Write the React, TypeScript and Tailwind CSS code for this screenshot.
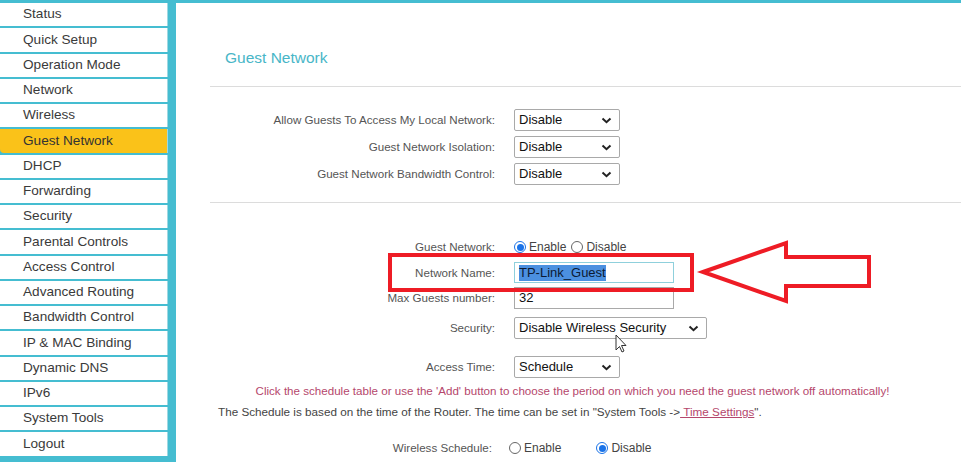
import React from 'react';

const MENU = [
  'Status',
  'Quick Setup',
  'Operation Mode',
  'Network',
  'Wireless',
  'Guest Network',
  'DHCP',
  'Forwarding',
  'Security',
  'Parental Controls',
  'Access Control',
  'Advanced Routing',
  'Bandwidth Control',
  'IP & MAC Binding',
  'Dynamic DNS',
  'IPv6',
  'System Tools',
  'Logout',
];

function Chevron() {
  return (
    <svg width="11" height="7" viewBox="0 0 11 7" className="shrink-0">
      <polyline points="1.5,1.5 5.5,5.2 9.5,1.5" fill="none" stroke="#222" strokeWidth="2" />
    </svg>
  );
}

function Select({ value, width }: { value: string; width: string }) {
  return (
    <div
      className={`${width} h-[22px] border border-[#a9a9a9] rounded-[2px] bg-white flex items-center justify-between pl-[4px] pr-[7px] text-[13px] text-[#111]`}
    >
      <span>{value}</span>
      <Chevron />
    </div>
  );
}

function Radio({ checked }: { checked?: boolean }) {
  return checked ? (
    <span className="w-[12px] h-[12px] shrink-0 rounded-full border-[1.5px] border-[#1a73e8] flex items-center justify-center bg-white">
      <span className="w-[7px] h-[7px] rounded-full bg-[#1a73e8]" />
    </span>
  ) : (
    <span className="w-[12px] h-[12px] shrink-0 rounded-full border border-[#666] bg-white block" />
  );
}

function Row({ label, children, className = '' }: { label: string; children: React.ReactNode; className?: string }) {
  return (
    <div className={`flex items-center ${className}`}>
      <div className="w-[320px] text-right text-[11.6px] text-[#555] pr-[1px]">{label}</div>
      <div className="ml-[18px] flex items-center">{children}</div>
    </div>
  );
}

export default function App() {
  return (
    <div className="w-[961px] h-[462px] overflow-hidden bg-white flex flex-col font-['Liberation_Sans',Arial,sans-serif] relative">
      <div className="h-[3px] bg-[#45bdd1] shrink-0" />
      <div className="flex flex-1 min-h-0">
        {/* Sidebar */}
        <nav className="w-[176px] shrink-0 bg-[#45bdd1] pr-[8px] flex flex-col gap-[2px]">
          {MENU.map((item) => (
            <div
              key={item}
              className={`h-[23.25px] shrink-0 flex items-center pl-[23px] text-[13.6px] border-r border-[#9fd8e2] ${
                item === 'Guest Network'
                  ? 'bg-[#fac219] text-[#333] rounded-bl-[4px]'
                  : 'bg-white text-[#3a3a3a]'
              }`}
            >
              {item}
            </div>
          ))}
        </nav>

        {/* Main */}
        <main className="flex-1 flex flex-col">
          <h1 className="ml-[49px] mt-[45px] text-[15.5px] leading-[20px] text-[#48b6c7]">Guest Network</h1>
          <div className="ml-[34px] mt-[18px] h-px bg-[#dcdcdc]" />

          <div className="mt-[22px] flex flex-col gap-[5px]">
            <Row label="Allow Guests To Access My Local Network:">
              <Select value="Disable" width="w-[106px]" />
            </Row>
            <Row label="Guest Network Isolation:">
              <Select value="Disable" width="w-[106px]" />
            </Row>
            <Row label="Guest Network Bandwidth Control:">
              <Select value="Disable" width="w-[106px]" />
            </Row>
          </div>

          <div className="ml-[34px] mt-[17px] h-px bg-[#dcdcdc]" />

          <Row label="Guest Network:" className="mt-[33px] h-[22px]">
            <Radio checked />
            <span className="ml-[3px] text-[12px] text-[#444]">Enable</span>
            <span className="ml-[5px] flex">
              <Radio />
            </span>
            <span className="ml-[3px] text-[12px] text-[#444]">Disable</span>
          </Row>
          <Row label="Network Name:" className="mt-[4px] h-[21px]">
            <div className="w-[160px] h-[21px] border border-[#8fd0dc] bg-white flex items-center pl-[4px]">
              <span className="bg-[#4b90e0] text-[#0c1a33] text-[13px] leading-[16px]">TP-Link_Guest</span>
            </div>
          </Row>
          <Row label="Max Guests number:" className="mt-[4px] h-[22px]">
            <div className="w-[160px] h-[22px] border border-[#a9a9a9] bg-white flex items-center pl-[4px] text-[13px] text-[#111]">
              32
            </div>
          </Row>
          <Row label="Security:" className="mt-[8px] h-[22px]">
            <Select value="Disable Wireless Security" width="w-[193px]" />
          </Row>
          <Row label="Access Time:" className="mt-[17px] h-[22px]">
            <Select value="Schedule" width="w-[106px]" />
          </Row>

          <p className="mt-[5px] h-[16px] leading-[16px] text-center text-[11.6px] text-[#b5476c] pl-[8px]">
            Click the schedule table or use the 'Add' button to choose the period on which you need the guest network off automatically!
          </p>
          <p className="mt-[5px] h-[16px] leading-[16px] ml-[42px] text-[11.7px] text-[#444]">
            The Schedule is based on the time of the Router. The time can be set in "System Tools -&gt;
            <span className="underline text-[#b5476c]">&nbsp;Time Settings</span>".
          </p>

          <div className="mt-[20px] h-[16px] flex items-center">
            <div className="w-[316px] text-right text-[11.6px] text-[#555]">Wireless Schedule:</div>
            <div className="ml-[17px] flex items-center">
              <Radio />
              <span className="ml-[3px] text-[12px] text-[#444]">Enable</span>
              <span className="ml-[35px] flex">
                <Radio checked />
              </span>
              <span className="ml-[3px] text-[12px] text-[#444]">Disable</span>
            </div>
          </div>
        </main>
      </div>

      {/* Annotation overlay */}
      <div className="absolute left-[388px] top-[253px] w-[306px] h-[39px] border-[4px] border-[#ee1c25] pointer-events-none" />
      <svg className="absolute left-0 top-0 pointer-events-none" width="961" height="462">
        <polygon
          points="703,272 786,243 786,257 869,257 869,286 786,286 786,301"
          fill="none"
          stroke="#ee1c25"
          strokeWidth="4"
          strokeLinejoin="miter"
        />
        <path
          d="M616,335 L616,350 L619.5,346.5 L622,352 L624,351 L621.5,345.5 L626,345.5 Z"
          fill="#fff"
          stroke="#333"
          strokeWidth="1"
        />
      </svg>
    </div>
  );
}
